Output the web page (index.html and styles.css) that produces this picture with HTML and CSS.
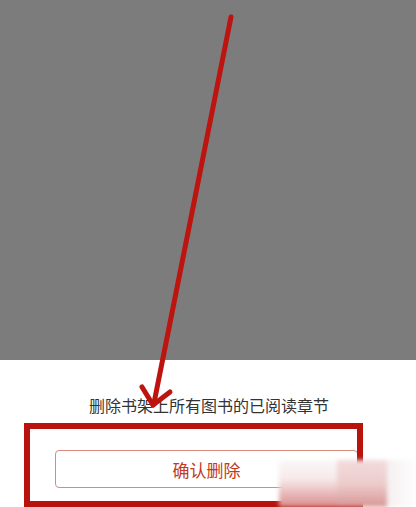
FILE: index.html
```html
<!DOCTYPE html>
<html lang="zh">
<head>
<meta charset="utf-8">
<link rel="stylesheet" href="styles.css">
</head>
<body>
<div class="page">
  <div class="dim"></div>
  <div class="sheet">
    <p class="msg">删除书架上所有图书的已阅读章节</p>
    <button class="confirm">确认删除</button>
  </div>
  <div class="highlight"></div>
  <svg class="arrow" width="416" height="507" viewBox="0 0 416 507">
    <g stroke="#bd140f" stroke-width="5" stroke-linecap="round" fill="none">
      <line x1="231" y1="17" x2="154" y2="403"/>
      <line x1="142" y1="387" x2="153" y2="405"/>
      <line x1="170" y1="392" x2="153" y2="405"/>
    </g>
  </svg>
  <div class="watermark">
    <div class="wm-a"></div>
    <div class="wm-b"></div>
    <div class="wm-c"></div>
  </div>
</div>
</body>
</html>
```
FILE: styles.css
```css
html, body {
  margin: 0;
  padding: 0;
  background: #ffffff;
}
.page {
  position: relative;
  width: 416px;
  height: 507px;
  overflow: hidden;
  font-family: "Noto Sans CJK SC", "Noto Sans", sans-serif;
}
.dim {
  height: 360px;
  background: #7c7c7c;
}
.sheet {
  display: flex;
  flex-direction: column;
  align-items: center;
  padding-top: 34px;
}
.msg {
  margin: 0;
  font-size: 16px;
  line-height: 22px;
  color: #333333;
  padding-left: 2px;
}
.confirm {
  margin: 34px 0 0 -3px;
  width: 303px;
  height: 38px;
  border: 1px solid #d98a7c;
  border-radius: 4px;
  background: #ffffff;
  color: #c23a22;
  font-family: "Noto Sans CJK SC", "Noto Sans", sans-serif;
  font-size: 17px;
  padding: 0;
}
.highlight {
  position: absolute;
  left: 24px;
  top: 423px;
  width: 327px;
  height: 72px;
  border: 6px solid #b8130c;
}
.arrow {
  position: absolute;
  left: 0;
  top: 0;
}
.watermark {
  position: absolute;
  left: 279px;
  top: 460px;
  width: 137px;
  height: 47px;
  display: flex;
  filter: blur(2px);
}
.wm-a {
  width: 58px;
  background: linear-gradient(to bottom, #fbf7f7 0%, #f7eaea 40%, #e6b4b4 75%, #d88d8d 100%);
}
.wm-b {
  width: 50px;
  background: linear-gradient(to bottom, #f3dcdc 0%, #edcccc 50%, #d99696 100%);
}
.wm-c {
  width: 29px;
  background: linear-gradient(to right, #f6f0f0, #fdfdfd);
}
```
